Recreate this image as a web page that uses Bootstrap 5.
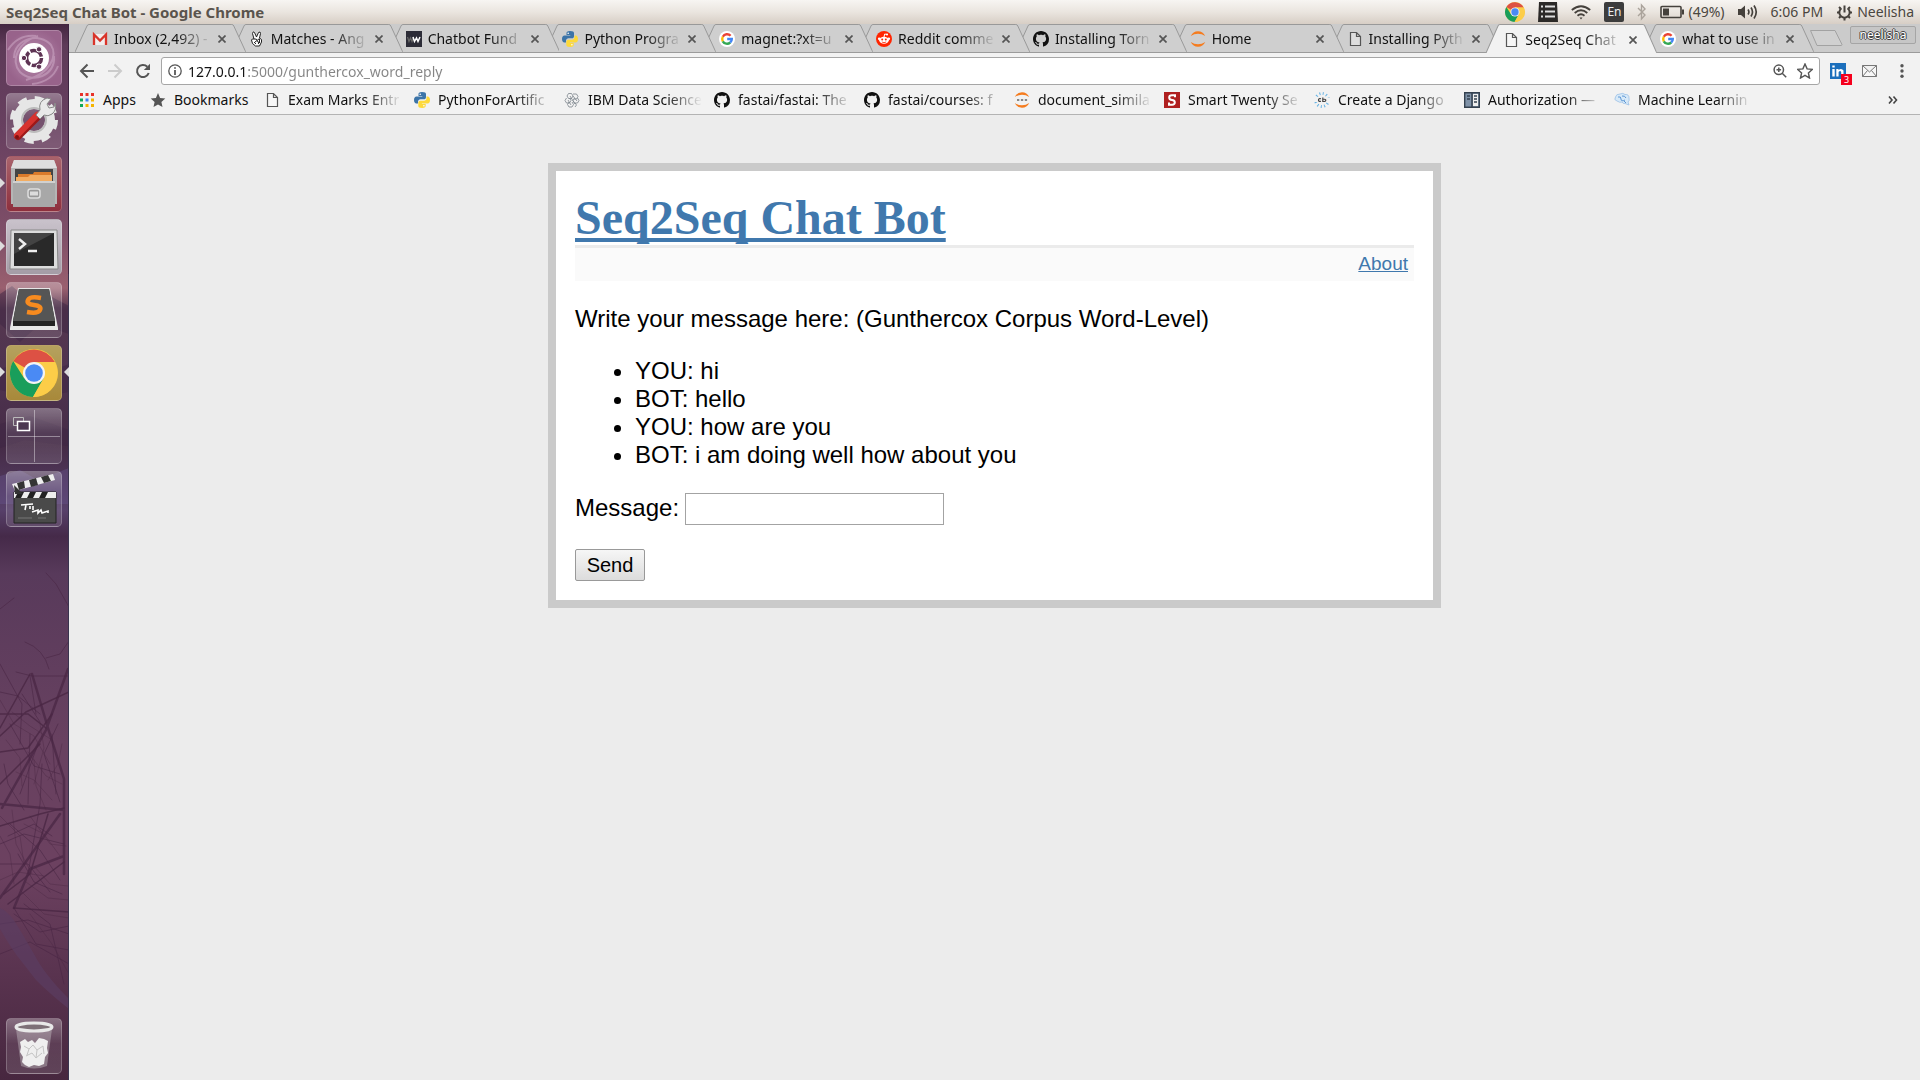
<!DOCTYPE html>
<html lang="en">
<head>
<meta charset="utf-8">
<meta name="viewport" content="width=device-width, initial-scale=1">
<title>Seq2Seq Chat Bot</title>
<link rel="stylesheet" href="https://cdn.jsdelivr.net/npm/bootstrap@5.3.0/dist/css/bootstrap.min.css">
<style>
  body { font-family: "Noto Sans", "Open Sans", sans-serif; font-size: 14px; line-height: 20px; color: #111; background: #ececec; }
  svg { display: block; flex: none; }
  a { color: inherit; text-decoration: none; }
  .plain-btn { border: 0; padding: 0; background: none; color: inherit; }
  .shrinkable { min-width: 0; }

  /* desktop panel */
  .panel-top { height: 24px; padding: 0 6px; background: linear-gradient(#f7f5f2, #eae5df 50%, #d7cec5); color: #5a544d; }
  .panel-title { font-weight: 700; font-size: 15px; }
  .tray-item { color: #4a4640; }
  .tray-gap { gap: 13px; }
  .tray-lang { width: 20px; height: 20px; border-radius: 2px; background: #3c3c3c; color: #eee; font-size: 12px; }

  /* launcher */
  .launcher { width: 69px; padding: 6px; gap: 7px; background: #5c3b58; overflow: hidden; }
  .wallpaper { position: absolute; inset: 0; width: 100%; height: 100%; }
  .tile { position: relative; width: 56px; height: 56px; border-radius: 5px; border: 1px solid #ffffff38; background: linear-gradient(#ffffff50, #ffffff18 45%, #ffffff20); }
  .tile > svg { position: absolute; left: -1px; top: -1px; }
  .tile-dash { background: radial-gradient(circle, #b78bad, #98638b 75%); }
  .tile-files { background: linear-gradient(#a9636c, #8e2f3d); }
  .tile-term { background: linear-gradient(#c9c2cb, #a49ca6); }
  .tile-chrome { background: linear-gradient(#b5a15e, #a8893a); }
  .pip { position: absolute; top: 21px; width: 0; height: 0; border: 5px solid transparent; }
  .pip-l { left: -7px; border-left-color: #ddd; border-right-width: 0; }
  .pip-r { right: -8px; border-right-color: #ddd; border-left-width: 0; }

  /* tab strip */
  .tabstrip { height: 29px; padding-left: 6px; background: #cbcbcb; border-bottom: 1px solid #9b9b9b; }
  .tab { position: relative; flex: 1 1 0; min-width: 0; height: 28px; padding: 2px 20px 0 17px; margin-right: -14px; gap: 6px; }
  .tab:last-child { margin-right: 0; flex-basis: 14px; }
  .tab-shape { position: absolute; left: 0; top: 0; width: 100%; height: 28px; fill: #cfcfcf; stroke: #999; }
  .tab.on { z-index: 20; height: 29px; }
  .tab.on .tab-shape { fill: #f2f2f2; height: 29px; }
  .tab > *:not(.tab-shape) { position: relative; }
  .fade-text { min-width: 0; overflow: hidden; white-space: nowrap; -webkit-mask-image: linear-gradient(90deg, #000 calc(100% - 36px), transparent); mask-image: linear-gradient(90deg, #000 calc(100% - 36px), transparent); }
  .strip-end { width: 106px; gap: 6px; }
  .newtab { margin-left: -6px; z-index: 1; }
  .user-btn { width: 66px; height: 18px; margin-bottom: 6px; border: 1px solid #a5a5a5; border-radius: 2px; background: #c6c6c6; color: #fff; font-size: 12px; line-height: 14px; text-shadow: 1px 0 #444, -1px 0 #444, 0 1px #444, 0 -1px #444; }

  /* toolbar */
  .toolbar { height: 35px; padding: 4px 13px 3px 10px; background: #f2f2f2; color: #555; }
  .nav-icons { width: 82px; gap: 12px; }
  .omnibox { height: 28px; padding: 0 6px; gap: 6px; border: 1px solid #a6a6a6; border-radius: 3px; background: #fff; }
  .url-input { min-width: 0; height: 24px; border: 0; padding: 0; outline: 0; font-family: "Noto Sans", sans-serif; font-size: 14px; color: #555; background: linear-gradient(90deg, #111 60px, #858585 60px); -webkit-background-clip: text; background-clip: text; -webkit-text-fill-color: transparent; }
  .ext { width: 87px; padding-left: 10px; }
  .ext-count { position: absolute; left: 11px; top: 11px; width: 11px; height: 11px; background: #f5001d; color: #fff; font-size: 9px; line-height: 11px; }

  /* bookmarks */
  .bookbar { height: 27px; padding: 0 22px 3px 10px; background: #f2f2f2; border-bottom: 1px solid #b3b3b3; }
  .bm { width: 150px; padding-right: 12px; gap: 8px; }
  .bm-apps { width: 71px; }
  .bm-folder { width: 114px; }
  .bm-solid { white-space: nowrap; }

  /* page */
  .viewport-area { padding-top: 48px; font-family: "Liberation Sans", Arial, sans-serif; font-size: 24px; line-height: 28px; color: #000; }
  .chat-box { width: 893px; max-width: 100%; border: 8px solid #cacaca; padding: 19px; background: #fff; }
  .chat-title { margin: 0; font-family: "Liberation Serif", "Times New Roman", serif; font-weight: 700; font-size: 48px; line-height: 55px; }
  .chat-box a { color: #4078ad; text-decoration: underline; text-decoration-skip-ink: none; }
  .chat-title a { text-decoration-thickness: 4px !important; text-underline-offset: 4px; }
  .chat-nav { border-top: 3px solid #ebebeb; background: #fafafa; padding: 4px 6px 6px; font-size: 19px; line-height: 23px; margin-bottom: 24px; }
  .chat-box p, .chat-log { margin: 0 0 24px; }
  .chat-log { padding-left: 60px; }
  .msg-row { gap: 6px; margin-bottom: 24px; }
  .msg-row label { padding-bottom: 2px; }
  .msg-input { width: 259px; height: 32px; padding: 2px; border: 1px solid #a3a3a3; background: #fff; font-size: 20px; }
  .send-btn { width: 70px; height: 32px; padding: 0; border: 1px solid #999; border-radius: 2px; background: linear-gradient(#f6f6f6, #dcdcdc); font-size: 20px; line-height: 28px; color: #000; }
</style>
<script src="https://cdn.jsdelivr.net/npm/bootstrap@5.3.0/dist/js/bootstrap.bundle.min.js"></script>
</head>
<body class="d-flex flex-column min-vh-100">

<svg width="0" height="0" class="position-absolute" aria-hidden="true">
  <symbol id="i-shape" viewBox="0 0 171 28" preserveAspectRatio="none"><path d="M0 28 12 2Q12.600.5 14 .5H157Q158.500.5 159 2L171 28"/></symbol>
  <symbol id="i-x" viewBox="0 0 8 8"><path d="M.5.5l7 7M7.500.5l-7 7" stroke="#555" stroke-width="1.700" fill="none"/></symbol>
  <symbol id="i-gmail" viewBox="0 0 16 16"><path d="M1 3h14v11H1z" fill="#f1eded"/><path d="M2 14V3.500L8 9.500l6-6V14" fill="none" stroke="#d9352b" stroke-width="2.300"/></symbol>
  <symbol id="i-hand" viewBox="0 0 16 16"><path d="M5 8 3.500 2.500Q4-.3 5.500 1.500L7.500 6 9.500 1.500Q11.500 0 11.500 2.500L10.500 7Q13.500 8 12.500 11L10.500 15H6.500L3.500 12.500 2.500 9Q3 7.500 5 8Z" fill="#fff" stroke="#222"/><path d="M5 8q3-.5 3 1.500L6 11M8 9.500l2.500-2M8 10q2 0 1.500 3M10.500 8v4M5 11l2 2" fill="none" stroke="#222"/></symbol>
  <symbol id="i-w" viewBox="0 0 16 16"><path d="M0 0h16v16H0z" fill="#2c2c37"/><path d="M1.500 6 3 10.500 4.500 7 6 10.500 7.500 6" stroke="#666" stroke-width="1.300" fill="none"/><path d="M7 6l1.500 4.500L10.500 7l1.500 3.500L14 6" stroke="#fff" stroke-width="1.500" fill="none"/></symbol>
  <symbol id="i-py" viewBox="0 0 16 16"><path d="M8 0C5 0 4.500 1 4.500 2.200V4H8.300v.6H2.500C1 4.600 0 6 0 8.100s1 3.500 2.300 3.500H4V9.700C4 8.300 5.100 7.300 6.500 7.300H10c1.200 0 2-1 2-2.100v-3C12 .8 11 0 8 0Z" fill="#3c74a8"/><path d="M8.200 16c3 0 3.500-1 3.500-2.200V12H7.900v-.6h5.800C15.200 11.400 16 10 16 7.900s-1-3.500-2.300-3.500H12.500v1.900c0 1.400-1.100 2.400-2.500 2.400H6.300c-1.200 0-2 1-2 2.100v3C4.300 15.200 5.200 16 8.200 16Z" fill="#fdd93a"/><circle cx="6.200" cy="2.200" r=".8" fill="#fff"/><circle cx="9.900" cy="13.800" r=".8" fill="#fff"/></symbol>
  <symbol id="i-g" viewBox="0 0 16 16"><circle cx="8" cy="8" r="8" fill="#fff"/><g fill="none" stroke-width="2.400"><path d="M11.600 4.800A4.800 4.800 0 0 0 3.800 5.700" stroke="#ea4335"/><path d="M3.800 5.700a4.800 4.800 0 0 0 0 4.600" stroke="#fbbc05"/><path d="M3.800 10.300a4.800 4.800 0 0 0 7.400 1.200" stroke="#34a853"/><path d="M11.200 11.500A4.500 4.500 0 0 0 12.800 8H8.200" stroke="#4285f4"/></g></symbol>
  <symbol id="i-reddit" viewBox="0 0 16 16"><circle cx="8" cy="8" r="8" fill="#ff2500"/><ellipse cx="8" cy="9.300" rx="4.800" ry="3.500" fill="#fff"/><circle cx="3.200" cy="7.800" r="1.300" fill="#fff"/><circle cx="12.800" cy="7.800" r="1.300" fill="#fff"/><circle cx="11" cy="3.500" r="1.100" fill="#fff"/><path d="M8 6l.7-3 2.300.5" stroke="#fff" fill="none"/><path d="M5.800 11q2.200 1.300 4.400 0" stroke="#ff2500" fill="none" stroke-width=".8"/><circle cx="6.200" cy="8.600" r="1" fill="#ff2500"/><circle cx="9.800" cy="8.600" r="1" fill="#ff2500"/></symbol>
  <symbol id="i-gh" viewBox="0 0 16 16"><path fill="#111" d="M8 0C3.580 0 0 3.580 0 8c0 3.540 2.290 6.530 5.470 7.590.4.070.55-.17.550-.38 0-.19-.01-.82-.01-1.490-2.010.37-2.530-.49-2.690-.94-.09-.23-.48-.94-.82-1.130-.28-.15-.68-.52-.01-.53.630-.01 1.080.58 1.230.82.720 1.210 1.870.87 2.330.66.070-.52.280-.87.510-1.070-1.780-.2-3.640-.89-3.640-3.950 0-.87.310-1.590.82-2.150-.08-.2-.36-1.020.080-2.120 0 0 .67-.21 2.200.82.640-.18 1.320-.27 2-.27s1.360.09 2 .27c1.530-1.040 2.200-.82 2.200-.82.440 1.100.160 1.920.080 2.120.510.56.820 1.270.82 2.150 0 3.070-1.870 3.750-3.650 3.950.290.25.540.73.540 1.480 0 1.070-.01 1.930-.01 2.200 0 .21.150.46.550.38A8.010 8.010 0 0 0 16 8c0-4.420-3.580-8-8-8Z"/></symbol>
  <symbol id="i-jup" viewBox="0 0 16 16"><path d="M.8 5Q3 .2 8 .2T15.200 5Q12 2.700 8 2.700T.8 5ZM.8 11Q3 15.800 8 15.800T15.200 11Q12 13.300 8 13.300T.8 11Z" fill="#f57c1f"/></symbol>
  <symbol id="i-jupd" viewBox="0 0 16 16"><use href="#i-jup"/><path d="M3 7h2.300v2H3zM6.900 7h2.300v2H6.900zM10.800 7h2.300v2h-2.300z" fill="#888"/></symbol>
  <symbol id="i-page" viewBox="0 0 16 16"><path d="M3.500 1.500h6l4 4v9h-10zM9.500 1.500v4h4" fill="#fff" fill-opacity=".3" stroke="#555" stroke-width="1.200"/></symbol>
  <symbol id="i-apps" viewBox="0 0 16 16"><path d="M1 1h3v3H1zM6.500 1h3v3h-3zM12 1h3v3h-3z" fill="#e8322a"/><path d="M1 6.500h3v3H1zM1 12h3v3H1z" fill="#10a75a"/><path d="M6.500 6.500h3v3h-3z" fill="#4184f3"/><path d="M12 6.500h3v3h-3zM6.500 12h3v3h-3zM12 12h3v3h-3z" fill="#f5b400"/></symbol>
  <symbol id="i-star" viewBox="0 0 16 16"><path d="M8 1l2.100 4.900 5.200.5-3.900 3.500 1.100 5.100L8 12.400 3.500 15l1.100-5.100L.7 6.400l5.200-.5z"/></symbol>
  <symbol id="i-ibm" viewBox="0 0 16 16"><g fill="none" stroke="#7b848c" stroke-width=".8"><path d="M4.500 1.500h3L9 4 7.500 6.500h-3L3 4zM9 2h3.500L14 4.500 12.500 7H10M2.500 6 1 8.500 2.500 11h3L7 8.500 5.500 6M10.500 6 9 8.500l1.500 2.500h3L15 8.500 13.500 6M5 10l-1.500 2.500L5 15h3l1.500-2.500L8 10M11 11l1.500 2L11 15M6 4l5 8M4 8l3 5M9 4l4 5"/></g></symbol>
  <symbol id="i-s" viewBox="0 0 16 16"><path d="M0 0h16v16H0z" fill="#b02020"/><path d="M11 5.300V3.300H8Q5.200 3.300 5.200 5.600T8 8q2.800.3 2.800 2.400T8 12.700H5v-2.200" fill="none" stroke="#fff" stroke-width="2"/></symbol>
  <symbol id="i-cb" viewBox="0 0 16 16"><circle cx="8" cy="8" r="6.500" fill="none" stroke="#65b2e4" stroke-width="2.800" stroke-dasharray="1 2.400"/><path d="M0 6h16v4H0z" fill="#f2f2f2"/><path d="M7 6.800Q4.500 6 4.500 8T7 9.200M8.800 5.500v4h1.700q1.300-.2 1.300-1.300T8.800 7" fill="none" stroke="#444" stroke-width="1.200"/></symbol>
  <symbol id="i-book" viewBox="0 0 16 16"><path d="M.7.700h14.600v14.600H.7z" fill="#7f92a8" stroke="#34414f" stroke-width="1.400"/><path d="M8 0v16" stroke="#34414f" stroke-width="1.500"/><path d="M9 2h5v12H9z" fill="#eee"/><path d="M10 4h3M10 7h3M10 10h3M3 4h3M3 7h3" stroke="#34414f" stroke-width="1.500"/></symbol>
  <symbol id="i-ml" viewBox="0 0 16 16"><path d="M3 9Q-.5 8 1.500 5 2 2 6 2q3-1.500 5 .5Q15 2 15 6q.7 3-1 4l1 3-4-1.500Q9 12 8 10q-2 1-5-1Z" fill="#d7e9f8" stroke="#9cc0e6" stroke-width=".8"/><path d="M4 5q3-1 3 2t4 1M8 4q3-.5 4 2M10 9l2 2" fill="none" stroke="#5d97d4"/></symbol>
  <symbol id="i-chrome" viewBox="0 0 48 48"><circle cx="24" cy="24" r="24" fill="#f9c842"/><path d="M24 24 3.200 12A24 24 0 0 1 44.800 13H24Z" fill="#dd5144"/><path d="M3.200 12A24 24 0 0 0 23 48L34 29 24 24 14 29Z" fill="#199e5b"/><path d="M24 13H44.800A24 24 0 0 1 23 48L33.500 29.500Z" fill="#fccd48"/><circle cx="24" cy="24" r="11" fill="#f4f4f4"/><circle cx="24" cy="24" r="8.800" fill="#4a8af4"/></symbol>
</svg>

<header class="panel-top d-flex align-items-center justify-content-between">
  <div class="panel-title">Seq2Seq Chat Bot - Google Chrome</div>
  <div class="d-flex align-items-center tray-gap tray-item">
    <svg width="20" height="20"><use href="#i-chrome"/></svg>
    <svg width="20" height="20" viewBox="0 0 20 20"><path d="M1 0h18l1 20H0z" fill="#2b2927"/><path d="M3 4.500h2M3 9.500h2M3 14.500h2M7 4.500h10M7 9.500h10M7 14.500h10" stroke="#ddd" stroke-width="2"/></svg>
    <svg width="20" height="20" viewBox="0 0 20 20" fill="none" stroke="#45413c" stroke-width="1.800"><path d="M.8 8Q10 .5 19.200 8M3.700 11Q10 5.500 16.300 11M6.500 13.700q3.500-3 7 0"/><path d="M8.500 15.500h3L10 17.500z" fill="#45413c" stroke="none"/></svg>
    <span class="tray-lang d-flex align-items-center justify-content-center">En</span>
    <svg width="10" height="18" viewBox="0 0 10 18"><path d="M1 5l7 7-3.500 4V2L8 6l-7 7" fill="none" stroke="#aaa39b" stroke-width="1.400"/></svg>
    <span class="d-flex align-items-center gap-1"><svg width="24" height="14" viewBox="0 0 24 14"><rect x="1" y="1.500" width="20" height="11" rx="1" fill="none" stroke="#45413c" stroke-width="1.600"/><path d="M3 3.500h6v7H3zM22 4.500h2v5h-2z" fill="#45413c"/></svg>(49%)</span>
    <svg width="20" height="18" viewBox="0 0 20 18"><path d="M0 6h3l4-3.500v13L3 12H0z" fill="#45413c"/><path d="M10 6.500q1.800 2.500 0 5M13 4.500q3 4.500 0 9M16 2.500q4.500 6.500 0 13" fill="none" stroke="#45413c" stroke-width="1.700"/></svg>
    <time>6:06 PM</time>
    <span class="d-flex align-items-center gap-1"><svg width="17" height="17" viewBox="0 0 17 17"><path d="M5.500 4.200a5.200 5.200 0 1 0 6 0" fill="none" stroke="#45413c" stroke-width="2"/><path d="M8.500 1.500v7M1 8.500h2M14 8.500h2M3 3l1.500 1.500M14 3l-1.500 1.500M3 14l1.500-1.500M14 14l-1.500-1.500M8.500 14v2.500" stroke="#45413c" stroke-width="2"/></svg>Neelisha</span>
  </div>
</header>

<div class="d-flex flex-grow-1">
  <aside class="launcher position-relative d-flex flex-column flex-shrink-0">
    <svg class="wallpaper" viewBox="0 0 69 1056" preserveAspectRatio="none">
      <defs>
        <linearGradient id="sky" x1="0" y1="0" x2="0" y2="1"><stop offset="0" stop-color="#432640"/><stop offset=".02" stop-color="#5e3a58"/><stop offset=".1" stop-color="#684060"/><stop offset=".2" stop-color="#7f4f68"/><stop offset=".25" stop-color="#9a606f"/><stop offset=".27" stop-color="#56374f"/><stop offset=".33" stop-color="#4f3450"/><stop offset=".4" stop-color="#452b46"/><stop offset=".46" stop-color="#57406a"/><stop offset=".485" stop-color="#452a49"/><stop offset=".52" stop-color="#583a5b"/><stop offset=".68" stop-color="#684160"/><stop offset=".8" stop-color="#6c4160"/><stop offset=".9" stop-color="#59334f"/><stop offset="1" stop-color="#47273f"/></linearGradient>
      </defs>
      <path d="M0 0h69v1056H0z" fill="url(#sky)"/>
      <g fill="#3d2543" opacity=".5"><path d="M0 270 12 262 28 276 50 272 69 282V310L40 300 20 318 0 300ZM0 345 22 338 40 352 69 340V368L36 374 0 366ZM0 400l30-8 39 14v16l-44-6-25 8z"/></g>
      <path d="M0 452 20 446 38 456 69 444V480H0Z" fill="#65528a" opacity=".45"/>
      <g fill="none" stroke="#4a2744" stroke-linecap="round">
        <path stroke-width="2.500" d="M68 645 46 706 2 784M32 650 48 704 64 755V850M0 780 64 786M64 832 30 845 14 884M0 874 60 790" opacity=".75"/>
        <path stroke-width="1.500" d="M30 650 0 704M0 728 28 724 52 690M0 802 40 790 64 784M0 690 28 690 46 704M4 870 30 850 48 790M8 880 64 838M0 712 26 688 69 668M14 884 69 888M0 760 18 742 40 720" opacity=".8"/>
        <path d="M46 549 56 560 69 583M0 585 14 574M25 618Q44 625 49 645M46 634 60 630 69 617M16 648 32 652 69 652M30 652 36 690M0 640 22 680 20 720M22 670 40 698M10 700 34 742 60 750M30 710 28 780M38 720 20 770M0 820 24 810 64 820M4 740 8 760 24 786M10 800 40 826 60 856M0 840 28 840 50 868M42 740 40 780 28 850M52 710 56 770M14 890 40 908 69 902M14 884 36 920 69 926M0 900 28 896 69 910M58 700 44 730 60 778M0 930 30 918 69 940M24 880 50 900 64 960M0 668 18 672 40 690M8 812 34 800 52 812M18 830 34 858 62 870" opacity=".6"/>
        <path d="M0 676 14 700 34 712 50 740M6 716 20 734 22 762M12 688 30 702 52 716M28 728 46 752 62 760M34 736 36 762 46 786M16 748 34 756 52 776M0 792 20 812 24 840M12 786 16 820 32 850M30 792 50 820 66 822M24 800 44 810 60 832M0 856 18 848 44 852M34 842 50 860 68 862M26 858 48 874 69 876M0 812 10 830 14 860M20 866 44 890 69 894M30 890 52 920 69 950M40 700 44 724 34 760M62 720 58 740 48 756" opacity=".4"/>
      </g>
      <path d="M0 884Q10 888 20 906L34 930Q44 950 69 975V985Q50 970 36 956L22 938Q12 926 0 905Z" fill="#5b3e62" opacity=".65"/>
      <path d="M68.500 0v250" stroke="#3c2440"/><path d="M68.500 250v806" stroke="#39344f"/>
    </svg>

    <button class="tile tile-dash plain-btn" aria-label="Search your computer"><svg width="56" height="56" viewBox="0 0 56 56"><path d="M8 28C8 8 34 2 45 15 52 26 44 44 20 50M48 26C50 46 26 54 14 42 4 30 12 12 32 6M2 20Q12 4 30 6M26 54Q46 52 52 36" fill="none" stroke="#d7b5d0" stroke-width="2" opacity=".45"/><circle cx="28" cy="28" r="15" fill="#fff"/><circle cx="28" cy="28" r="7.500" fill="none" stroke="#5e3454" stroke-width="3.500" stroke-dasharray="14 1.700"/><g fill="#5e3454" stroke="#fff"><circle cx="18" cy="28" r="2.700"/><circle cx="33" cy="19.300" r="2.700"/><circle cx="33" cy="36.700" r="2.700"/></g></svg></button>

    <button class="tile plain-btn" aria-label="System Settings"><svg width="56" height="56" viewBox="0 0 56 56"><circle cx="28" cy="27" r="16" fill="none" stroke="#e6e6e6" stroke-width="10"/><circle cx="28" cy="27" r="21.500" fill="none" stroke="#e6e6e6" stroke-width="5" stroke-dasharray="9 7.900"/><circle cx="28" cy="27" r="12" fill="none" stroke="#bbb" stroke-width="2"/><path d="M12 43 32 23" stroke="#9e1919" stroke-width="8" stroke-linecap="round"/><path d="M11 42.500 31 22" stroke="#d7332f" stroke-width="6" stroke-linecap="round"/><path d="M34 17Q32 8 41 5l4 1-4 5 2 4 5-1 1-4q2 7-3 11-4 3-8 1l-4 4-4-4z" fill="#e9e9e9" stroke="#888"/><circle cx="11" cy="44" r="2" fill="#801010"/></svg></button>

    <button class="tile tile-files plain-btn" aria-label="Files"><span class="pip pip-l"></span><svg width="56" height="56" viewBox="0 0 56 56"><path d="M8 4h40l3 8v36H5V12z" fill="#b5b5b5"/><path d="M8 4h40l3 8H5z" fill="#dedede"/><path d="M9 13h38v14H9z" fill="#444"/><path d="M12 18h15l1-2h17v10H12z" fill="#da7b2b"/><path d="M10 21h12l2-2h22v8H10z" fill="#f3ad62"/><path d="M7 25h42v26H7z" fill="#a8a8a8"/><path d="M7 25h42v2H7z" fill="#d0d0d0"/><rect x="22" y="33" width="12" height="9" rx="2.500" fill="#999" stroke="#ddd" stroke-width="1.500"/><rect x="24" y="35.500" width="8" height="4" fill="#ddd"/></svg></button>

    <button class="tile tile-term plain-btn" aria-label="Terminal"><span class="pip pip-l"></span><svg width="56" height="56" viewBox="0 0 56 56"><path d="M5 11h46l1 39H4z" fill="#dcdcdc" stroke="#888"/><path d="M8 14h40v33H8z" fill="#292929"/><path d="M8 14h40L8 35z" fill="#555" opacity=".6"/><path d="M13 20l6 5-6 5M22 32h9" fill="none" stroke="#eee" stroke-width="2.500"/></svg></button>

    <button class="tile plain-btn" aria-label="Sublime Text"><svg width="56" height="56" viewBox="0 0 56 56"><path d="M12 6h32l8 40v2H4v-2z" fill="#e6e6e6"/><path d="M13 7h30l6 32v5H7v-5z" fill="#232323"/><path d="M13 7h30l6 32H7z" fill="#555"/><path d="M35 16Q24 14 22 18 20 22 28 23T34 28Q32 32 21 30" fill="none" stroke="#f78b1f" stroke-width="4.500"/></svg></button>

    <button class="tile tile-chrome plain-btn" aria-label="Google Chrome"><span class="pip pip-l"></span><span class="pip pip-r"></span><svg width="56" height="56" viewBox="0 0 56 56"><use href="#i-chrome" x="4" y="4" width="48" height="48"/></svg></button>

    <button class="tile plain-btn" aria-label="Workspace Switcher"><svg width="56" height="56" viewBox="0 0 56 56" fill="none"><path d="M28.500 2v52M2 28.500h52" stroke="#fff" opacity=".4"/><path d="M7.500 9.500h10v8h-10z" stroke="#bbb"/><path d="M11.500 13.500h12v9h-12z" fill="#4b3750" stroke="#fff" stroke-width="1.500"/></svg></button>

    <button class="tile plain-btn" aria-label="Video editor"><svg width="56" height="56" viewBox="0 0 56 56"><path d="M8 21h42v31H8z" fill="#4a4a4a" stroke="#222"/><path d="M8 21h42v6H8z" fill="#eee"/><path d="M12 21h6l-3 6H9zM24 21h6l-3 6h-6zM36 21h6l-3 6h-6z" fill="#222"/><path d="M6 13 47 3l2 6L9 20z" fill="#eee"/><path d="M11 12l7-2 1 7-6 2zM23 9l7-2 2 7-7 2zM35 6l7-2 3 6-7 2z" fill="#333"/><path d="M8 14l9 9H9z" fill="#333"/><path d="M15 34l12-1M20 34l-1 5M24 35v3M27 35v4M26 41l6-2v3l3-3 1 3 6-2v2" stroke="#fff" stroke-width="1.600" fill="none"/><path d="M12 47h14M32 47h8" stroke="#777"/></svg></button>

    <button class="tile plain-btn mt-auto" aria-label="Trash"><svg width="56" height="56" viewBox="0 0 56 56"><path d="M10 11h36l-5 37q-13 5-26 0z" fill="#ddd" opacity=".35"/><path d="M14 24l5-3 3 3 4-2 3 3 4-5 5 1 4 2-1 7 1 5-3 4-1 7-5 2-5-1-5 2-4-2-3-3 1-5-3-5 1-5z" fill="#efefef"/><path d="M18 28l5 3 4-4 4 5 6-4M20 38l6-3 4 5 6-5M23 31l-2 6M31 32l-1 8M37 28l1 8" fill="none" stroke="#c4c4c4"/><ellipse cx="28" cy="9" rx="18" ry="4" fill="#7d7077" stroke="#e8e8e8" stroke-width="3"/></svg></button>
  </aside>

  <div class="shrinkable flex-grow-1 d-flex flex-column">
    <div class="tabstrip d-flex">
      <nav class="shrinkable d-flex flex-grow-1" id="tabs" aria-label="Open tabs"></nav>
      <div class="strip-end d-flex align-items-center flex-shrink-0">
        <button class="newtab plain-btn" aria-label="New tab"><svg width="36" height="18" viewBox="0 0 36 18"><path d="M2.500 1.500H27l7 14Q34 16.500 33 16.500H9z" fill="#d0d0d0" stroke="#a2a2a2"/></svg></button>
        <button class="user-btn p-0">neelisha</button>
      </div>
    </div>

    <div class="toolbar d-flex align-items-center">
      <div class="nav-icons d-flex align-items-center">
        <button class="plain-btn" aria-label="Back"><svg width="16" height="16" viewBox="0 0 16 16" fill="none" stroke="#555" stroke-width="2"><path d="M15 8H3M8.500 1.500 2 8l6.500 6.500"/></svg></button>
        <button class="plain-btn" aria-label="Forward"><svg width="16" height="16" viewBox="0 0 16 16" fill="none" stroke="#ccc" stroke-width="2"><path d="M1 8h12M7.500 1.500 14 8l-6.500 6.500"/></svg></button>
        <button class="plain-btn" aria-label="Reload"><svg width="16" height="16" viewBox="0 0 16 16"><path d="M13.700 10A6 6 0 1 1 12.300 3.800" fill="none" stroke="#555" stroke-width="2"/><path d="M15 .8V7H8.800z" fill="#555"/></svg></button>
      </div>
      <div class="omnibox d-flex align-items-center flex-grow-1">
        <svg width="14" height="14" viewBox="0 0 14 14"><circle cx="7" cy="7" r="6.200" fill="none" stroke="#555" stroke-width="1.300"/><path d="M6.200 3.200h1.600v1.600H6.200zM6.200 6h1.600v5H6.200z" fill="#444"/></svg>
        <input class="url-input flex-grow-1" type="text" aria-label="Address" value="127.0.0.1:5000/gunthercox_word_reply">
        <button class="plain-btn me-1" aria-label="Zoom"><svg width="14" height="14" viewBox="0 0 14 14" fill="none" stroke="#555" stroke-width="1.500"><circle cx="5.800" cy="5.800" r="4.700"/><path d="M9.200 9.200l4 4M3.500 5.800h4.600M5.800 3.500v4.600"/></svg></button>
        <button class="plain-btn" aria-label="Bookmark this page"><svg width="16" height="16" fill="none" stroke="#555" stroke-width="1.400"><use href="#i-star"/></svg></button>
      </div>
      <div class="ext d-flex align-items-center justify-content-between">
        <button class="plain-btn position-relative" aria-label="LinkedIn"><svg width="16" height="16" viewBox="0 0 16 16"><path d="M0 0h16v16H0z" fill="#1c6fbc"/><path d="M2.300 6h2.400v7.500H2.300zM2.300 2.500h2.400v2H2.300zM6.300 6h2.200v1q3-2.300 5 .5v6h-2.300V9q-1-2-2.600 0v4.500H6.300z" fill="#fff"/></svg><span class="ext-count">3</span></button>
        <button class="plain-btn" aria-label="Mail"><svg width="15" height="12" viewBox="0 0 15 12"><path d="M.5.500h14v11H.5zM.5.500l7 6.500 7-6.500M.5 11.500l5-6M14.500 11.500l-5-6" fill="#f8f8f8" stroke="#777"/></svg></button>
        <button class="plain-btn" aria-label="Menu"><svg width="14" height="16" viewBox="0 0 14 16" fill="#555"><circle cx="9" cy="2.700" r="1.700"/><circle cx="9" cy="8" r="1.700"/><circle cx="9" cy="13.300" r="1.700"/></svg></button>
      </div>
    </div>

    <nav class="bookbar d-flex align-items-center" aria-label="Bookmarks">
      <a class="bm bm-apps d-flex align-items-center" href="#"><svg width="16" height="16"><use href="#i-apps"/></svg><span class="bm-solid">Apps</span></a>
      <a class="bm bm-folder d-flex align-items-center" href="#"><svg width="16" height="16" fill="#555"><use href="#i-star"/></svg><span class="bm-solid">Bookmarks</span></a>
      <div class="shrinkable d-flex flex-grow-1" id="marks"></div>
      <button class="plain-btn" aria-label="More bookmarks"><svg width="10" height="10" viewBox="0 0 10 10" fill="none" stroke="#444" stroke-width="1.600"><path d="M1 1.500 4 5 1 8.500M5.500 1.500l3 3.500-3 3.500"/></svg></button>
    </nav>

    <main class="viewport-area flex-grow-1">
      <section class="chat-box mx-auto">
        <h1 class="chat-title"><a href="#">Seq2Seq Chat Bot</a></h1>
        <nav class="chat-nav text-end"><a href="#">About</a></nav>
        <p>Write your message here: (Gunthercox Corpus Word-Level)</p>
        <ul class="chat-log">
          <li>YOU: hi</li>
          <li>BOT: hello</li>
          <li>YOU: how are you</li>
          <li>BOT: i am doing well how about you</li>
        </ul>
        <form>
          <div class="msg-row d-flex align-items-center">
            <label for="message">Message:</label>
            <input class="msg-input" id="message" type="text">
          </div>
          <button class="send-btn d-block" type="button">Send</button>
        </form>
      </section>
    </main>
  </div>
</div>

<script>
  const tabs = [
    ['gmail', 'Inbox (2,492) -'], ['hand', 'Matches - Ang'], ['w', 'Chatbot Fund'],
    ['py', 'Python Progra'], ['g', 'magnet:?xt=u'], ['reddit', 'Reddit comme'],
    ['gh', 'Installing Torn'], ['jup', 'Home'], ['page', 'Installing Pyth'],
    ['page', 'Seq2Seq Chat'], ['g', 'what to use in']
  ];
  document.getElementById('tabs').innerHTML = tabs.map(([icon, text], i) => `
    <div class="tab d-flex align-items-center ${i === 9 ? 'on' : ''}" ${i === 9 ? '' : `style="z-index:${11 - i}"`}>
      <svg class="tab-shape"><use href="#i-shape"/></svg>
      <svg width="16" height="16"><use href="#i-${icon}"/></svg>
      <a class="fade-text flex-grow-1" href="#">${text}</a>
      <button class="plain-btn" aria-label="Close tab"><svg width="8" height="8"><use href="#i-x"/></svg></button>
    </div>`).join('');

  const marks = [
    ['page', 'Exam Marks Entr'], ['py', 'PythonForArtific'], ['ibm', 'IBM Data Science'],
    ['gh', 'fastai/fastai: The'], ['gh', 'fastai/courses: f'], ['jupd', 'document_simila'],
    ['s', 'Smart Twenty Se'], ['cb', 'Create a Django'], ['book', 'Authorization —'],
    ['ml', 'Machine Learnin']
  ];
  document.getElementById('marks').innerHTML = marks.map(([icon, text]) => `
    <a class="bm d-flex align-items-center" href="#"><svg width="16" height="16"><use href="#i-${icon}"/></svg><span class="fade-text flex-grow-1">${text}</span></a>`).join('');
</script>
</body>
</html>
